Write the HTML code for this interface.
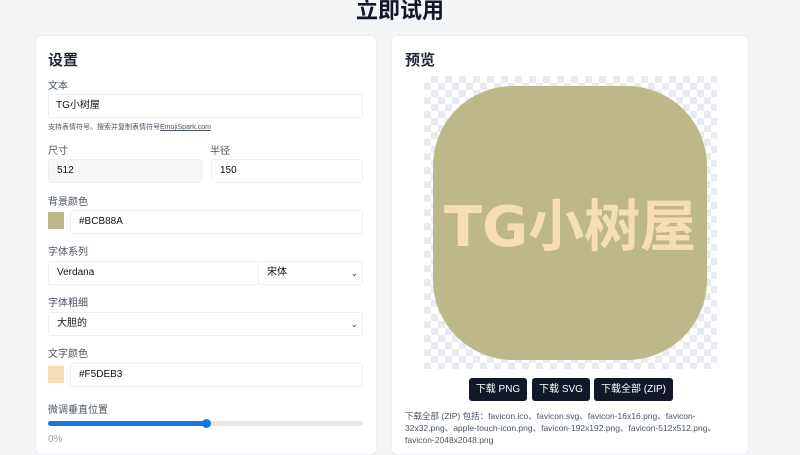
<!DOCTYPE html>
<html><head><meta charset="utf-8"><style>
*{box-sizing:border-box;margin:0;padding:0}
body{width:800px;height:445px;overflow:hidden;background:#f4f5f7;font-family:"Liberation Sans","Noto Sans CJK SC",sans-serif;color:#1f2937;position:relative}
h1{position:absolute;top:-7px;left:0;width:800px;text-align:center;font-size:22px;font-weight:bold;color:#111827}
.card{position:absolute;background:#fff;border-radius:6px;border:1px solid #eceef1}
.l{left:35px;top:35px;width:342px;height:420px}
.r{left:391px;top:35px;width:358px;height:420px}
h2{position:absolute;font-size:15px;font-weight:bold;color:#1f2937}
.lab{position:absolute;font-size:10px;color:#4b5563}
.in{position:absolute;height:24px;border:1px solid #eceef1;border-radius:3px;font-size:10px;line-height:22px;padding-left:8px;color:#111;background:#fff}
.sw{position:absolute;width:16px;height:17px}
.btn{position:absolute;top:378px;height:23px;background:#111827;color:#fff;font-size:10px;line-height:23px;text-align:center;border-radius:3px}
.chev{position:absolute;right:4px;top:0;font-size:9px;color:#444}
</style></head><body>
<h1>立即试用</h1>
<div class="card l"></div>
<div class="card r"></div>
<h2 style="left:48px;top:49px">设置</h2>
<div class="lab" style="left:48px;top:77px">文本</div>
<div class="in" style="left:48px;top:94px;width:315px;padding-left:7px">TG小树屋</div>
<div class="lab" style="left:48px;top:122px;font-size:7px">支持表情符号。搜索并复制表情符号<u>EmojiSpark.com</u></div>
<div class="lab" style="left:48px;top:142px">尺寸</div>
<div class="lab" style="left:210px;top:142px">半径</div>
<div class="in" style="left:48px;top:159px;width:154px;background:#f7f7f8">512</div>
<div class="in" style="left:211px;top:159px;width:152px">150</div>
<div class="lab" style="left:48px;top:193px">背景颜色</div>
<div class="sw" style="left:48px;top:212px;background:#BCB88A"></div>
<div class="in" style="left:70px;top:210px;width:293px">#BCB88A</div>
<div class="lab" style="left:48px;top:243px">字体系列</div>
<div class="in" style="left:48px;top:261px;width:211px">Verdana</div>
<div class="in" style="left:258px;top:261px;width:105px">宋体<span class="chev">⌄</span></div>
<div class="lab" style="left:48px;top:294px">字体粗细</div>
<div class="in" style="left:48px;top:312px;width:315px">大胆的<span class="chev">⌄</span></div>
<div class="lab" style="left:48px;top:345px">文字颜色</div>
<div class="sw" style="left:48px;top:366px;background:#F5DEB3"></div>
<div class="in" style="left:70px;top:363px;width:293px">#F5DEB3</div>
<div class="lab" style="left:48px;top:401px">微调垂直位置</div>
<div style="position:absolute;left:48px;top:421px;width:315px;height:5px;border-radius:3px;background:#e5e7eb"></div>
<div style="position:absolute;left:48px;top:421px;width:158px;height:5px;border-radius:3px;background:#1a73e8"></div>
<div style="position:absolute;left:202px;top:419px;width:9px;height:9px;border-radius:50%;background:#1a73e8"></div>
<div class="lab" style="left:48px;top:434px;color:#9ca3af">0%</div>
<h2 style="left:405px;top:49px">预览</h2>
<div style="position:absolute;left:424px;top:76px;width:293px;height:293px;background-color:#fff;background-image:linear-gradient(45deg,#e8ebf0 25%,transparent 25%,transparent 75%,#e8ebf0 75%),linear-gradient(45deg,#e8ebf0 25%,transparent 25%,transparent 75%,#e8ebf0 75%);background-size:14px 14px;background-position:0 0,7px 7px"></div>
<div style="position:absolute;left:433px;top:86px;width:274px;height:274px;border-radius:80px;background:#BCB88A;color:#F5DEB3;font-weight:bold;font-size:56px;text-align:center;line-height:284px;white-space:nowrap;overflow:hidden;font-family:'DejaVu Sans','Noto Sans CJK SC',sans-serif">TG小树屋</div>
<div class="btn" style="left:469px;width:58px">下载 PNG</div>
<div class="btn" style="left:532px;width:58px">下载 SVG</div>
<div class="btn" style="left:594px;width:79px">下载全部 (ZIP)</div>
<div style="position:absolute;left:405px;top:410px;width:330px;font-size:8.5px;line-height:12px;color:#4b5563">下载全部 (ZIP) 包括：favicon.ico、favicon.svg、favicon-16x16.png、favicon-32x32.png、apple-touch-icon.png、favicon-192x192.png、favicon-512x512.png、favicon-2048x2048.png</div>
</body></html>
